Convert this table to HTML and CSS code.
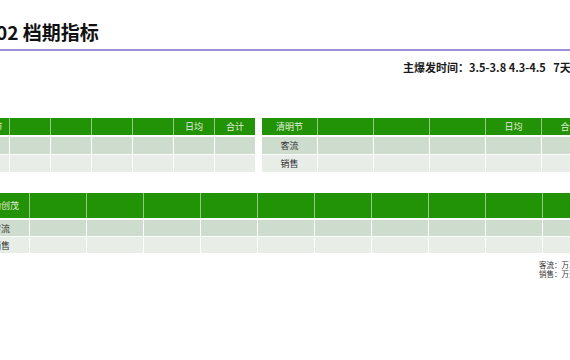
FILE: index.html
```html
<!DOCTYPE html>
<html lang="zh">
<head>
<meta charset="utf-8">
<link rel="stylesheet" href="styles.css">
</head>
<body>
<div class="slide">
  <div class="title-bar"><h1 class="title">02 档期指标</h1></div>
  <div class="subtitle">主爆发时间：3.5-3.8 4.3-4.5&nbsp;&nbsp;&nbsp;7天</div>

  <div class="tables-top">
    <div class="tbl t1">
      <div class="row head"><div class="c">妇女节</div><div class="c"></div><div class="c"></div><div class="c"></div><div class="c"></div><div class="c">日均</div><div class="c">合计</div></div>
      <div class="row r1"><div class="c">客流</div><div class="c"></div><div class="c"></div><div class="c"></div><div class="c"></div><div class="c"></div><div class="c"></div></div>
      <div class="row r2"><div class="c">销售</div><div class="c"></div><div class="c"></div><div class="c"></div><div class="c"></div><div class="c"></div><div class="c"></div></div>
    </div>
    <div class="tbl t2">
      <div class="row head"><div class="c">清明节</div><div class="c"></div><div class="c"></div><div class="c"></div><div class="c">日均</div><div class="c">合计</div></div>
      <div class="row r1"><div class="c">客流</div><div class="c"></div><div class="c"></div><div class="c"></div><div class="c"></div><div class="c"></div></div>
      <div class="row r2"><div class="c">销售</div><div class="c"></div><div class="c"></div><div class="c"></div><div class="c"></div><div class="c"></div></div>
    </div>
  </div>

  <div class="tbl t3">
    <div class="row head"><div class="c">联动创茂</div><div class="c"></div><div class="c"></div><div class="c"></div><div class="c"></div><div class="c"></div><div class="c"></div><div class="c"></div><div class="c"></div><div class="c"></div><div class="c"></div></div>
    <div class="row r1"><div class="c">客流</div><div class="c"></div><div class="c"></div><div class="c"></div><div class="c"></div><div class="c"></div><div class="c"></div><div class="c"></div><div class="c"></div><div class="c"></div><div class="c"></div></div>
    <div class="row r2"><div class="c">销售</div><div class="c"></div><div class="c"></div><div class="c"></div><div class="c"></div><div class="c"></div><div class="c"></div><div class="c"></div><div class="c"></div><div class="c"></div><div class="c"></div></div>
  </div>

  <div class="notes">
    <div class="note">客流：万人</div>
    <div class="note">销售：万元</div>
  </div>
</div>
</body>
</html>
```

FILE: styles.css
```css
html, body {
  margin: 0;
  padding: 0;
  background: #ffffff;
  overflow: hidden;
}

body {
  width: 570px;
  height: 360px;
  font-family: "Noto Sans CJK SC", "Noto Sans", sans-serif;
  color: #222;
}

.slide {
  margin-left: -31px;
  width: 720px;
}

.title-bar {
  padding-top: 18px;
  padding-bottom: 3px;
  border-bottom: 2px solid #9d91db;
}

.title {
  margin: 0;
  padding-left: 27px;
  font-size: 19px;
  line-height: 28px;
  font-weight: 700;
  color: #111;
}

.subtitle {
  margin-top: 8px;
  padding-left: 434px;
  font-size: 11px;
  line-height: 16px;
  font-weight: 700;
  color: #1a1a1a;
  white-space: nowrap;
}

.tables-top {
  margin-top: 43px;
  display: flex;
  align-items: flex-start;
  gap: 7px;
}

.tbl {
  display: flex;
  flex-direction: column;
  align-items: flex-start;
  gap: 1px;
  background: #ffffff;
}

.row {
  display: grid;
  column-gap: 1px;
  font-size: 9px;
}

.t1 .row { grid-template-columns: repeat(7, 40px); }
.t2 .row { grid-template-columns: repeat(6, 55px); }
.t3 .row { grid-template-columns: repeat(11, 56px); }

.row.head {
  background: #93c784;
  height: 17px;
  margin-bottom: 1px;
}

.t3 .row.head { height: 25px; }

.c {
  display: flex;
  align-items: center;
  justify-content: center;
  white-space: nowrap;
}

.head .c {
  background: #229206;
  color: #e2eedd;
}

.row.r1, .row.r2 {
  background: #ffffff;
  height: 17px;
}

.t3 .row.r1, .t3 .row.r2 { height: 16px; }

.r1 .c { background: #cddccd; color: #333; }
.r2 .c { background: #e8ede8; color: #333; }

.t3 {
  margin-top: 21px;
  margin-left: 4px;
}

.notes {
  margin-top: 7px;
  padding-left: 570px;
  font-size: 7.5px;
  line-height: 9px;
  color: #333;
}

.note {
  white-space: nowrap;
}
```
